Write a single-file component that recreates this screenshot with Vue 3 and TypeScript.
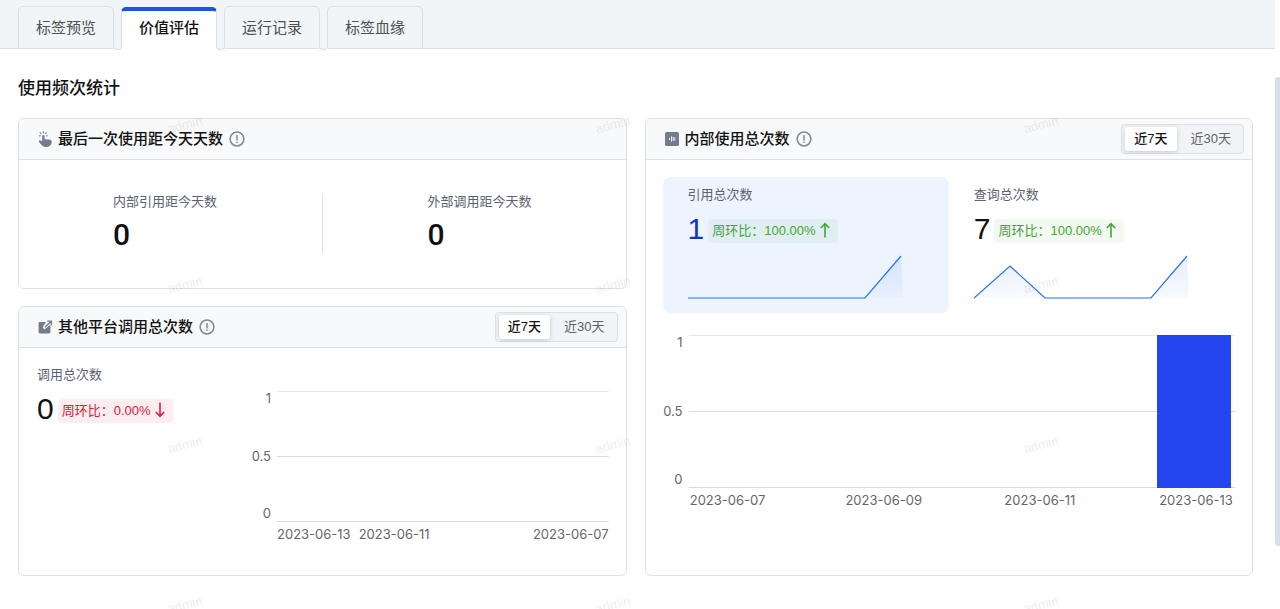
<script setup lang="ts">
import { ref } from 'vue'

interface Usage {
  label: string
  value: number
  ratio: string
  line: string
  area: string
}

const tabs: string[] = ['标签预览', '价值评估', '运行记录', '标签血缘']
const activeTab = ref<number>(1)

const ranges: string[] = ['近7天', '近30天']
const outerRange = ref<number>(0)
const innerRange = ref<number>(0)

const lastUsed = [
  { label: '内部引用距今天数', value: 0 },
  { label: '外部调用距今天数', value: 0 },
]

const usages: Usage[] = [
  {
    label: '引用总次数',
    value: 1,
    ratio: '100.00%',
    line: 'M0 43H177L213 1',
    area: 'M177 43L213 1L215 43Z',
  },
  {
    label: '查询总次数',
    value: 7,
    ratio: '100.00%',
    line: 'M0 43L36 11L71 43H177L213 1',
    area: 'M0 43L36 11L71 43ZM177 43L213 1L215 43Z',
  },
]
const activeUsage = ref<number>(0)

const ticks: string[] = ['1', '0.5', '0']
const outerDates: string[] = ['2023-06-13', '2023-06-11', '2023-06-07']
const innerDays = [
  { date: '2023-06-07', count: 0 },
  { date: '', count: 0 },
  { date: '2023-06-09', count: 0 },
  { date: '', count: 0 },
  { date: '2023-06-11', count: 0 },
  { date: '', count: 0 },
  { date: '2023-06-13', count: 1 },
]
</script>

<template>
  <div class="page">
    <nav class="tabs" role="tablist">
      <template v-for="(tab, i) in tabs" :key="tab">
        <button
          type="button"
          role="tab"
          class="tab"
          :class="{ active: activeTab === i }"
          :aria-selected="activeTab === i"
          @click="activeTab = i"
        >{{ tab }}</button>
        <span v-if="i < tabs.length - 1" class="joint"></span>
      </template>
    </nav>

    <main class="content">
      <h1>使用频次统计</h1>
      <div class="columns">
        <div class="column">
          <section class="card">
            <header class="card-head">
              <svg class="icon" width="14" height="16" viewBox="0 0 14 16" aria-hidden="true">
                <path d="M4.2 5.2C4.2 3.7 6.6 3.7 6.6 5.2V8.2L11 8.4C13 8.6 14 9.7 13.8 11C13.5 13.9 11.5 16 8.3 16C5 16 3.6 14.3 1.2 11.3C.2 9.8 1.3 8.8 2.6 9.4L4.2 10.2Z" fill="#747b8d" />
                <path d="M5.3 .2V2.4M1.8 1.4L3.2 3M8.8 1.4L7.4 3M1.2 4.9L2.8 4.7M8 4.7L9.6 4.9" fill="none" stroke="#747b8d" stroke-width="1.1" />
              </svg>
              <h2>最后一次使用距今天天数</h2>
              <svg class="info" width="16" height="16" viewBox="0 0 16 16" aria-hidden="true">
                <circle cx="8" cy="8" r="6.9" />
                <path d="M8 4V9.4M8 10.6V12" />
              </svg>
            </header>
            <div class="last-used">
              <div v-for="item in lastUsed" :key="item.label">
                <p class="label">{{ item.label }}</p>
                <strong class="days">{{ item.value }}</strong>
              </div>
            </div>
          </section>

          <section class="card grow">
            <header class="card-head">
              <svg class="icon" width="14" height="16" viewBox="0 0 14 16" aria-hidden="true">
                <path d="M1.8 3H8L5 7.4L7 9.6L12.4 6V13C12.4 14 12 14.4 11 14.4H2C1 14.4.6 14 .6 13V4.4C.6 3.4 1 3 1.8 3Z" fill="#747b8d" />
                <path d="M5.6 9.6L12.6 2.8M9 2.1H13.3V6.3" fill="none" stroke="#f8f9fb" stroke-width="2.6" />
                <path d="M7 8.3L12.8 2.6M9.2 2.1H13.3V6.3" fill="none" stroke="#747b8d" stroke-width="1.4" />
              </svg>
              <h2>其他平台调用总次数</h2>
              <svg class="info" width="16" height="16" viewBox="0 0 16 16" aria-hidden="true">
                <circle cx="8" cy="8" r="6.9" />
                <path d="M8 4V9.4M8 10.6V12" />
              </svg>
              <div class="segment">
                <button
                  v-for="(range, i) in ranges"
                  :key="range"
                  type="button"
                  :class="{ on: outerRange === i }"
                  :aria-pressed="outerRange === i"
                  @click="outerRange = i"
                >{{ range }}</button>
              </div>
            </header>
            <div class="outer-body">
              <div class="total">
                <p class="label">调用总次数</p>
                <p class="figure">
                  <span class="number">0</span>
                  <span class="badge down">周环比：0.00%
                    <svg width="10" height="16" viewBox="0 0 10 16" aria-hidden="true"><path d="M5 .5V14M.8 10L5 14.4L9.2 10" /></svg>
                  </span>
                </p>
              </div>
              <div class="chart outer-chart">
                <div class="axis"><span v-for="t in ticks" :key="t">{{ t }}</span></div>
                <div class="plot"></div>
                <div class="dates loose"><span v-for="d in outerDates" :key="d">{{ d }}</span></div>
              </div>
            </div>
          </section>
        </div>

        <section class="card">
          <header class="card-head">
            <svg class="icon" width="14" height="16" viewBox="0 0 14 16" aria-hidden="true">
              <rect y="1" width="14" height="14" rx="1.6" fill="#747b8d" />
              <path d="M4.5 7V9M6.5 5.4V10.6M8.2 6V10M9.8 6.4V9.6" fill="none" stroke="#fff" stroke-width=".9" />
            </svg>
            <h2>内部使用总次数</h2>
            <svg class="info" width="16" height="16" viewBox="0 0 16 16" aria-hidden="true">
              <circle cx="8" cy="8" r="6.9" />
              <path d="M8 4V9.4M8 10.6V12" />
            </svg>
            <div class="segment">
              <button
                v-for="(range, i) in ranges"
                :key="range"
                type="button"
                :class="{ on: innerRange === i }"
                :aria-pressed="innerRange === i"
                @click="innerRange = i"
              >{{ range }}</button>
            </div>
          </header>
          <div class="inner-body">
            <div class="usages">
              <button
                v-for="(u, i) in usages"
                :key="u.label"
                type="button"
                class="usage"
                :class="{ on: activeUsage === i }"
                :aria-pressed="activeUsage === i"
                @click="activeUsage = i"
              >
                <span class="label">{{ u.label }}</span>
                <span class="figure">
                  <span class="number">{{ u.value }}</span>
                  <span class="badge up">周环比：{{ u.ratio }}
                    <svg width="10" height="16" viewBox="0 0 10 16" aria-hidden="true"><path d="M5 15.5V2M.8 6L5 1.6L9.2 6" /></svg>
                  </span>
                </span>
                <svg class="spark" width="215" height="44" viewBox="0 0 215 44" aria-hidden="true">
                  <defs>
                    <linearGradient :id="'fade' + i" x1="0" y1="0" x2="0" y2="1">
                      <stop offset="0" stop-color="#2468f2" stop-opacity=".12" />
                      <stop offset="1" stop-color="#2468f2" stop-opacity=".03" />
                    </linearGradient>
                  </defs>
                  <path :d="u.area" :fill="`url(#fade${i})`" />
                  <path :d="u.line" fill="none" stroke="#2673f0" stroke-width="1.2" />
                </svg>
              </button>
            </div>
            <div class="chart inner-chart">
              <div class="axis"><span v-for="t in ticks" :key="t">{{ t }}</span></div>
              <div class="plot">
                <div v-for="(d, i) in innerDays" :key="i" class="slot">
                  <div class="bar" :style="{ height: d.count * 100 + '%' }"></div>
                </div>
              </div>
              <div class="dates even"><span v-for="(d, i) in innerDays" :key="i">{{ d.date }}</span></div>
            </div>
          </div>
        </section>
      </div>
    </main>

    <div class="scroll-thumb"></div>
    <svg class="watermark" width="100%" height="100%" aria-hidden="true">
      <defs>
        <pattern id="mark" x="-29" y="45" width="428" height="160" patternUnits="userSpaceOnUse">
          <text x="214" y="84" text-anchor="middle" transform="rotate(-15 214 80)">admin</text>
        </pattern>
      </defs>
      <rect width="100%" height="100%" fill="url(#mark)" />
    </svg>
  </div>
</template>

<style>
body {
  margin: 0;
  background: #fff;
}
</style>

<style scoped>
* {
  box-sizing: border-box;
}

.page {
  position: relative;
  height: 100vh;
  overflow: hidden;
  font-family: "Liberation Sans", "Noto Sans CJK SC", sans-serif;
  font-size: 13px;
  color: #111;
}

button {
  font: inherit;
  color: inherit;
  margin: 0;
  cursor: pointer;
}

h1,
h2,
p {
  margin: 0;
}

.tabs {
  display: flex;
  align-items: flex-end;
  height: 49px;
  margin-right: 5px;
  padding-left: 18px;
  background: #f1f5f8;
  box-shadow: inset 0 -1px #dcdfe6;
}

.tab {
  height: 43px;
  padding: 0 17px;
  border: 1px solid #dcdfe6;
  border-radius: 5px 5px 0 0;
  background: #f1f5f8;
  font-size: 15px;
  line-height: 41px;
  color: #4d4f54;
}

.tab.active {
  height: 42px;
  border-top: 4px solid #1d52f2;
  border-bottom-color: #fff;
  background: #fff;
  line-height: 34px;
  padding-bottom: 3px;
  font-weight: 500;
  color: #111;
}

.joint {
  z-index: 1;
  width: 9px;
  height: 34px;
  margin: 0 -1px;
  background: linear-gradient(#fff, #fff) bottom / 100% 4px no-repeat;
}

.joint::before {
  content: "";
  display: block;
  height: 100%;
  border: 1px solid #dcdfe6;
  border-top: 0;
  border-radius: 0 0 4px 4px;
  background: #f1f5f8;
}

.content {
  padding: 27px 27px 34px 18px;
}

h1 {
  font-size: 17px;
  line-height: 26px;
  font-weight: 500;
}

.columns {
  display: grid;
  grid-template-columns: 1fr 1fr;
  gap: 18px;
  margin-top: 16px;
}

.column {
  display: flex;
  flex-direction: column;
  gap: 17px;
}

.card {
  border: 1px solid #dee0e8;
  border-radius: 6px;
}

.grow {
  flex: 1;
}

.card-head {
  display: flex;
  align-items: center;
  gap: 6px;
  height: 41px;
  padding: 0 8px 0 19px;
  border-bottom: 1px solid #dee0e8;
  border-radius: 6px 6px 0 0;
  background: #f8f9fb;
}

h2 {
  font-size: 15px;
  line-height: 24px;
  font-weight: 500;
}

.icon {
  flex: none;
}

.info {
  flex: none;
  fill: none;
  stroke: #808996;
  stroke-width: 1.5;
}

.segment {
  display: flex;
  gap: 5px;
  height: 30px;
  margin-left: auto;
  padding: 2px 3px;
  border: 1px solid #dcdfe6;
  border-radius: 4px;
  background: #f1f4f7;
}

.segment button {
  padding: 0 9px;
  border: 0;
  border-radius: 3px;
  background: none;
  line-height: 24px;
  color: #606266;
}

.segment .on {
  background: #fff;
  box-shadow: 0 1px 4px rgba(0, 0, 0, 0.18);
  font-weight: 500;
  color: #111;
}

.label {
  display: block;
  line-height: 20px;
  color: #5b6272;
}

.last-used {
  display: flex;
  justify-content: space-between;
  padding: 32px 94px 35px;
  background: linear-gradient(#dee0e8, #dee0e8) center 34px / 1px 59px no-repeat;
}

.days {
  display: block;
  margin-top: 5px;
  font-family: Roboto, sans-serif;
  font-size: 30px;
  line-height: 36px;
  font-weight: 500;
}

.outer-body {
  display: flex;
  padding: 17px 17px 27px 18px;
}

.total {
  width: 214px;
}

.figure {
  display: flex;
  align-items: center;
  gap: 4px;
  height: 24px;
  margin-top: 14px;
}

.number {
  padding-bottom: 5px;
  font-size: 30px;
  line-height: 24px;
}

.badge {
  display: flex;
  align-items: center;
  gap: 4px;
  height: 24px;
  padding: 0 8px 0 4px;
  border-radius: 4px;
  line-height: 22px;
  white-space: nowrap;
}

.badge svg {
  margin-bottom: 3px;
  fill: none;
  stroke: currentColor;
  stroke-width: 1.6;
}

.down {
  background: #fcedf0;
  color: #d5213c;
}

.up {
  background: rgba(69, 167, 53, 0.07);
  color: #43a732;
}

.inner-body {
  padding: 17px;
}

.usages {
  display: grid;
  grid-template-columns: 1fr 1fr;
}

.usage {
  padding: 8px 25px 14px;
  border: 0;
  border-radius: 8px;
  background: none;
  text-align: left;
}

.usage.on {
  background: #edf4ff;
}

.usage.on .number {
  color: #1236b8;
}

.spark {
  display: block;
  max-width: 100%;
  margin-top: 12px;
}

.chart {
  display: grid;
  grid-template-columns: 26px 1fr;
  font-family: Inter, sans-serif;
  line-height: 14px;
  color: #666;
}

.outer-chart {
  flex: 1;
  grid-template-rows: 131px 26px;
  margin-top: 26px;
}

.inner-chart {
  grid-template-rows: 153px 26px;
  margin-top: 22px;
}

.axis {
  display: flex;
  flex-direction: column;
  justify-content: space-between;
  align-items: flex-end;
  padding: 0 6px 2px 0;
}

.plot {
  display: grid;
  grid-template-columns: repeat(7, 1fr);
  background:
    linear-gradient(#e6e6e6, #e6e6e6) top / 100% 1px no-repeat,
    linear-gradient(#d9d9d9, #d9d9d9) center / 100% 1px no-repeat,
    linear-gradient(#d9d9d9, #d9d9d9) bottom / 100% 1px no-repeat;
}

.slot {
  display: flex;
  align-items: flex-end;
}

.bar {
  width: 95%;
  background: #2446ee;
}

.dates {
  grid-column: 2;
  padding-top: 5px;
  white-space: nowrap;
}

.loose {
  display: flex;
  gap: 8px;
}

.loose span:last-child {
  margin-left: auto;
}

.even {
  display: grid;
  grid-template-columns: repeat(7, 1fr);
}

.even span {
  display: flex;
  justify-content: center;
}

.scroll-thumb {
  position: absolute;
  top: 77px;
  right: 0;
  width: 5px;
  height: 77%;
  border-radius: 3px 0 0 3px;
  background: #dddfe8;
}

.watermark {
  position: absolute;
  inset: 0;
  z-index: 2;
  pointer-events: none;
}

.watermark text {
  font-family: "Liberation Sans", sans-serif;
  font-size: 13px;
  fill: rgba(0, 0, 0, 0.07);
}
</style>
